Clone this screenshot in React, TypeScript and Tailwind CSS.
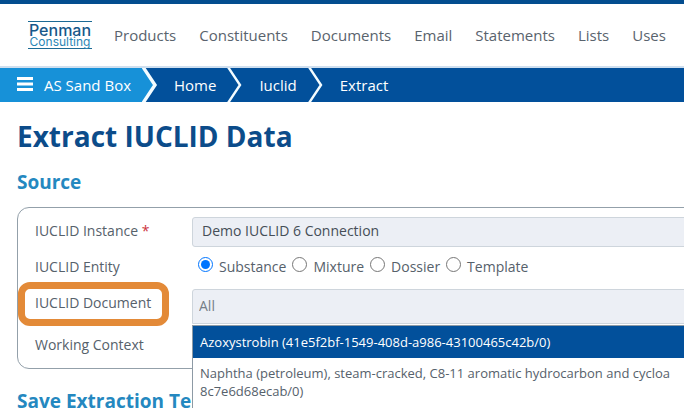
import React, { useState } from "react";

const navItems = ["Products", "Constituents", "Documents", "Email", "Statements", "Lists", "Uses"];
const entities = ["Substance", "Mixture", "Dossier", "Template"];

const Logo = () => (
  <a
    href="#"
    className="w-16 h-7 mr-[22px] shrink-0 flex flex-col items-center justify-center border-y border-[#1c6a94] font-[Inter,sans-serif]"
  >
    <span className="text-base leading-[14px] font-medium text-[#17588a]">Penman</span>
    <span className="text-xs leading-[10px] text-[#2c86b5]">Consulting</span>
  </a>
);

const Chevron = ({ first = false }: { first?: boolean }) => (
  <svg className="w-4 h-[34px] shrink-0" viewBox="0 0 16 34">
    {first && <path d="M0 0H1L14 17L1 34H0Z" fill="#1791d8" />}
    <path d="M1 -1L13 17L1 35" fill="none" stroke="#f4fcff" strokeWidth={first ? 3.4 : 2.4} />
  </svg>
);

const Navbar = () => (
  <header className="h-[68px] border-t-4 border-t-[#034d8f] border-b-2 border-b-[#cfdfef] flex items-center pl-7">
    <Logo />
    <nav className="flex gap-[23px] text-[15px] text-[#59636d]">
      {navItems.map((item) => (
        <a key={item} href="#">
          {item}
        </a>
      ))}
    </nav>
  </header>
);

const Breadcrumb = () => (
  <nav className="h-[34px] bg-[#02509b] text-white text-[15px] flex items-center">
    <div className="h-full bg-[#1791d8] pl-[17px] pr-[11px] flex items-center">
      <button aria-label="Menu" className="mr-[11px]">
        <svg className="w-4 h-4" viewBox="0 0 16 16" fill="none" stroke="currentColor" strokeWidth="3">
          <path d="M0 1.5H16M0 7H16M0 12.5H16" />
        </svg>
      </button>
      <a href="#">AS Sand Box</a>
    </div>
    <Chevron first />
    <a href="#" className="pl-4 pr-[11px]">
      Home
    </a>
    <Chevron />
    <a href="#" className="pl-4 pr-[11px]">
      Iuclid
    </a>
    <Chevron />
    <a href="#" className="pl-4">
      Extract
    </a>
  </nav>
);

const DocumentList = () => (
  <ul
    role="listbox"
    aria-label="IUCLID Document"
    className="absolute top-9 left-0 right-0 h-40 bg-white border border-[#8d9aa5] whitespace-nowrap text-[13px] leading-[18px]"
  >
    <li role="option" aria-selected="true" className="bg-[#02509b] text-white px-[7px] py-[7px]">
      Azoxystrobin (41e5f2bf-1549-408d-a986-43100465c42b/0)
    </li>
    <li role="option" aria-selected="false" className="px-[7px] py-[6px]">
      Naphtha (petroleum), steam-cracked, C8-11 aromatic hydrocarbon and cycloa
      <br />
      8c7e6d68ecab/0)
    </li>
  </ul>
);

const App = () => {
  const [entity, setEntity] = useState<string>("Substance");
  const [instance, setInstance] = useState<string>("Demo IUCLID 6 Connection");

  return (
    <div className="h-screen overflow-hidden bg-white text-[#56616b] font-['Open_Sans',sans-serif]">
      <Navbar />
      <Breadcrumb />
      <main className="pl-[17px]">
        <h1 className="pt-4 text-[28px] leading-9 font-bold text-[#0c4c8a]">Extract IUCLID Data</h1>
        <h2 className="pt-4 text-[19px] leading-6 font-bold text-[#2488c0]">Source</h2>
        <section className="mt-[13px] -mr-4 border border-[#93a0aa] rounded-xl pl-[17px] pt-[9px] pb-[13px] text-sm grid grid-cols-[157px_1fr]">
          <label htmlFor="instance" className="h-[30px] leading-7">
            IUCLID Instance <span className="text-[#cc3340]">*</span>
          </label>
          <select
            id="instance"
            value={instance}
            onChange={(e) => setInstance(e.target.value)}
            className="appearance-none h-[30px] rounded-[3px] border border-[#ced5dc] bg-[#eceff5] px-[9px] pb-[2px] text-[#454e57]"
          >
            <option>Demo IUCLID 6 Connection</option>
          </select>

          <span id="entity" className="h-[42px] leading-10">
            IUCLID Entity
          </span>
          <div role="radiogroup" aria-labelledby="entity" className="h-[42px] flex gap-[6px] pl-[6px]">
            {entities.map((item) => (
              <label key={item} className="flex gap-[6px] leading-10">
                <input
                  type="radio"
                  name="entity"
                  checked={entity === item}
                  onChange={() => setEntity(item)}
                  className="w-[15px] h-[15px] mt-[10px]"
                />
                {item}
              </label>
            ))}
          </div>

          <div className="h-9 relative">
            <label htmlFor="document" className="leading-7">
              IUCLID Document
            </label>
            <div className="absolute -left-[17px] -top-[7px] w-[151px] h-11 rounded-xl border-[7px] border-[#e38a38] pointer-events-none" />
          </div>
          <div className="relative h-9">
            <input
              id="document"
              type="text"
              placeholder="All"
              className="w-full h-[35px] rounded-t-[3px] border border-[#ced5dc] bg-[#eceff5] px-[6px] pb-[3px] placeholder:text-[#757e87]"
            />
            <DocumentList />
          </div>

          <span className="pt-1 leading-8 h-[30px]">Working Context</span>
        </section>
        <h2 className="pt-5 text-[19px] leading-6 font-bold text-[#2488c0]">Save Extraction Template</h2>
      </main>
    </div>
  );
};

export default App;
